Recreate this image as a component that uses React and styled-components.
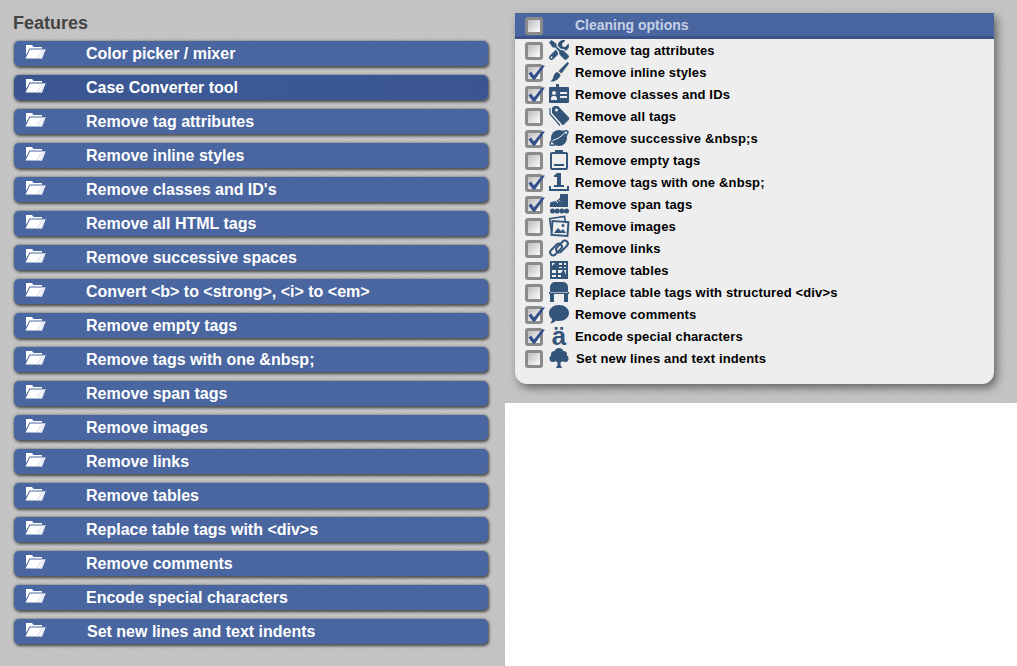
import React from 'react';
import styled, { createGlobalStyle } from 'styled-components';
import { FaTools } from 'react-icons/fa';

const features = [
  'Color picker / mixer',
  'Case Converter tool',
  'Remove tag attributes',
  'Remove inline styles',
  "Remove classes and ID's",
  'Remove all HTML tags',
  'Remove successive spaces',
  'Convert <b> to <strong>, <i> to <em>',
  'Remove empty tags',
  'Remove tags with one &nbsp;',
  'Remove span tags',
  'Remove images',
  'Remove links',
  'Remove tables',
  'Replace table tags with <div>s',
  'Remove comments',
  'Encode special characters',
  'Set new lines and text indents',
];

const Ico = styled.svg.attrs({ viewBox: '0 0 20 20', width: 20, height: 20, fill: 'currentColor' })`
  display: block;
  overflow: visible;
`;

const BrushIcon = () => (
  <Ico>
    <path d="M18.500 0L20 1.500 12.500 11.500 9.500 9z" />
    <path d="M8.500 10l3 2.500C11 16.500 6.500 20 1 19.500 4 18 4 15.500 5 13c.6-1.500 2-2.800 3.500-3z" />
  </Ico>
);

const IdCardIcon = () => (
  <Ico>
    <path d="M7 0h3v4H7z" />
    <path fillRule="evenodd" d="M1 3h18a1 1 0 0 1 1 1v14a1 1 0 0 1-1 1H1a1 1 0 0 1-1-1V4a1 1 0 0 1 1-1zm4 4a2 2 0 1 0 0 4 2 2 0 0 0 0-4zM2 16h6v-2.500L6.500 12h-3L2 13.500zm9-8v2h7V8zm0 4v2h7v-2z" />
  </Ico>
);

const TagIcon = () => (
  <Ico>
    <path fillRule="evenodd" d="M5 0h4l11 11.500q.6 1 0 2L15 18.500q-1 1-2 0L3 7V2zm2.500 2.500a1.500 1.500 0 1 0 0 3 1.500 1.500 0 0 0 0-3z" />
    <path fill="none" stroke="currentColor" strokeWidth="1.200" d="M1 2v6l10 11.500" />
  </Ico>
);

const PlanetIcon = () => (
  <Ico>
    <circle cx="10" cy="10" r="8" />
    <ellipse cx="10" cy="10" rx="11" ry="3.500" transform="rotate(-38 10 10)" fill="none" stroke="currentColor" strokeWidth="1.500" />
    <path d="M3.500 12.500C8 11.500 13 8 16 4.500" fill="none" stroke="#eeeeee" strokeWidth="1" />
  </Ico>
);

const EmptyTagIcon = () => (
  <Ico>
    <path d="M6 0h8v2H6z" />
    <path fillRule="evenodd" d="M3 2h14a2 2 0 0 1 2 2v14a2 2 0 0 1-2 2H3a2 2 0 0 1-2-2V4a2 2 0 0 1 2-2zm0 2v14h14V4z" />
    <path d="M5 14h10v2H5z" />
  </Ico>
);

const OneIcon = () => (
  <Ico>
    <path d="M8 1h4v12h3v2H5v-2h3V5H5V3.500z" />
    <path d="M0 14h2v3h16v-3h2v5H0z" />
  </Ico>
);

const SkateIcon = () => (
  <Ico>
    <path d="M11 0h8v13H1c-.5-2 0-4 1-5l5-1 4-3z" />
    <path d="M1 13.500h18" stroke="#eeeeee" strokeWidth=".7" />
    <path d="M7 7l2 2M9 5.500l2 2" stroke="#eeeeee" strokeWidth="1" />
    <circle cx="3.500" cy="17" r="2.500" />
    <circle cx="8.200" cy="17" r="2.500" />
    <circle cx="12.900" cy="17" r="2.500" />
    <circle cx="17.500" cy="17" r="2.500" />
  </Ico>
);

const ImagesIcon = () => (
  <Ico>
    <rect x="1.500" y="1.500" width="15" height="12" transform="rotate(-8 9 8)" fill="none" stroke="currentColor" strokeWidth="1.600" />
    <rect x="3" y="5.500" width="16" height="14" transform="rotate(4 11 12)" fill="#eeeeee" stroke="currentColor" strokeWidth="2" />
    <path d="M5 17l4-5 3 3 2-2 3 4z" />
    <circle cx="14" cy="9.500" r="1.500" />
  </Ico>
);

const LinkIcon = () => (
  <Ico>
    <g fill="none" stroke="currentColor" strokeWidth="2">
      <rect x="6" y="5.500" width="14" height="6" rx="3" transform="rotate(-45 13 8.500)" />
      <rect x="0" y="8.500" width="14" height="6" rx="3" transform="rotate(-45 7 11.500)" />
    </g>
  </Ico>
);

const TableIcon = () => (
  <Ico>
    <path fillRule="evenodd" d="M1 1h18v18H1zM3 10v3h4v-3zm6 0v3h3l2-3zm-6 5v2h4v-2zm6 0v2h3v-2zM10 3v2h3V3zm5 0v2h2V3zm-5 4v1h3V7zm5 0v1h2V7z" />
    <path fill="#eeeeee" d="M3 3h3L3 6z" />
    <path fill="#eeeeee" d="M15 10h2v5z" />
  </Ico>
);

const StructureIcon = () => (
  <Ico>
    <path d="M6 0h8a5 5 0 0 1 5 5v5h1v2h-1v8h-4V12H5v8H1v-8H0v-2h1V5a5 5 0 0 1 5-5z" />
    <path d="M1 10.500h18" stroke="#eeeeee" strokeWidth=".6" />
  </Ico>
);

const CommentIcon = () => (
  <Ico>
    <path d="M10 1c5.500 0 10 3.500 10 8s-4.500 8-10 8c-1 0-2 0-3-.3C5 18.500 3 19.500 1 19.500c1.500-1.500 2-3 2-4.500C1 13.500 0 11.500 0 9c0-4.500 4.500-8 10-8z" />
  </Ico>
);

const TreeIcon = () => (
  <Ico>
    <circle cx="10" cy="4.500" r="4.500" />
    <circle cx="5.500" cy="6.500" r="3.500" />
    <circle cx="14.500" cy="6.500" r="3.500" />
    <circle cx="4" cy="10.500" r="3.500" />
    <circle cx="16" cy="10.500" r="3.500" />
    <circle cx="10" cy="10" r="4.500" />
    <path d="M8.500 12h3v5l1.500 3H7l1.500-3z" />
  </Ico>
);

const FolderIcon = () => (
  <svg viewBox="0 0 21 14" width="21" height="14">
    <path fill="#fff" d="M1 0h6l1.500 2H17v1.500H4.500L1 10z" />
    <path fill="#fff" d="M5 4.500h15.500L17 13.500H0.500z" />
    <path fill="#dfe4f0" d="M11 13.500l6-9h1.500l-6 9zM15 13.500l4-9h1.500L17 13.500z" />
  </svg>
);

const options = [
  { label: 'Remove tag attributes', icon: <FaTools size={20} /> },
  { label: 'Remove inline styles', icon: <BrushIcon />, checked: true },
  { label: 'Remove classes and IDs', icon: <IdCardIcon />, checked: true },
  { label: 'Remove all tags', icon: <TagIcon /> },
  { label: 'Remove successive &nbsp;s', icon: <PlanetIcon />, checked: true },
  { label: 'Remove empty tags', icon: <EmptyTagIcon /> },
  { label: 'Remove tags with one &nbsp;', icon: <OneIcon />, checked: true },
  { label: 'Remove span tags', icon: <SkateIcon />, checked: true },
  { label: 'Remove images', icon: <ImagesIcon /> },
  { label: 'Remove links', icon: <LinkIcon /> },
  { label: 'Remove tables', icon: <TableIcon /> },
  { label: 'Replace table tags with structured <div>s', icon: <StructureIcon /> },
  { label: 'Remove comments', icon: <CommentIcon />, checked: true },
  { label: 'Encode special characters', glyph: 'ä', checked: true },
  { label: 'Set new lines and text indents', icon: <TreeIcon />, nudge: true },
];

const GlobalStyle = createGlobalStyle`
  html, body {
    margin: 0;
    padding: 0;
    background: #fff;
  }
  body {
    font-family: "Liberation Sans", Arial, sans-serif;
  }
`;

const Page = styled.div`
  display: flex;
  align-items: flex-start;
  width: 1017px;
  height: 666px;
  overflow: hidden;
`;

const textured = `
  background-color: #c4c4c4;
  background-image:
    repeating-linear-gradient(37deg, rgba(255, 255, 255, 0.025) 0 1px, transparent 1px 3px),
    repeating-linear-gradient(-61deg, rgba(0, 0, 0, 0.02) 0 1px, transparent 1px 4px);
`;

const FeatureColumn = styled.section`
  width: 505px;
  height: 666px;
  flex: none;
  box-sizing: border-box;
  padding: 13px 17px 0 14px;
  ${textured}
`;

const Heading = styled.h2`
  margin: 0 0 8px -1px;
  height: 20px;
  font-size: 18px;
  line-height: 20px;
  font-weight: bold;
  color: #444;
`;

const FeatureList = styled.div`
  display: flex;
  flex-direction: column;
  gap: 9px;
`;

const FeatureButton = styled.div`
  display: flex;
  align-items: center;
  height: 25px;
  border-radius: 5px;
  background: ${({ $active }) => ($active ? 'linear-gradient(90deg, #3a5590, #3d5a96 40%, #3a5590)' : '#4a66a0')};
  box-shadow: 0 0 3px #666, 1px 2px 3px #444;
  color: #fff;
  font-size: 16px;
  font-weight: bold;
`;

const FolderSlot = styled.span`
  display: flex;
  width: 72px;
  flex: none;
  box-sizing: border-box;
  padding: 0 0 4px 11px;
`;

const FeatureLabel = styled.span`
  padding-left: ${({ $nudge }) => ($nudge ? '1px' : '0')};
  white-space: pre;
`;

const OptionsColumn = styled.section`
  width: 512px;
  height: 403px;
  flex: none;
  box-sizing: border-box;
  padding: 13px 23px 0 10px;
  ${textured}
`;

const Panel = styled.div`
  height: 371px;
  border-radius: 0 0 12px 12px;
  background: #eeeeee;
  box-shadow: 3px 4px 8px #666;
`;

const PanelHeader = styled.div`
  display: flex;
  align-items: center;
  height: 23px;
  padding-left: 10px;
  background: #4a66a0;
  border-bottom: 3px solid #3a5288;
  color: #c5d0e6;
  font-size: 14px;
  font-weight: bold;
`;

const HeaderLabel = styled.span`
  margin-left: 32px;
`;

const OptionRow = styled.div`
  display: flex;
  align-items: center;
  height: 22px;
  padding-left: 10px;
  color: #000;
  font-size: 13px;
  font-weight: bold;
  letter-spacing: 0.15px;
`;

const CheckBox = styled.span`
  position: relative;
  display: block;
  flex: none;
  width: 12px;
  height: 12px;
  margin-top: 2px;
  border: 3px solid #8b8b8b;
  border-radius: 3px;
  background: linear-gradient(135deg, #bcbcbc, #fdfdfd);
`;

const Tick = styled.svg`
  position: absolute;
  left: -3px;
  top: -3px;
  width: 20px;
  height: 18px;
`;

const IconSlot = styled.span`
  display: flex;
  align-items: center;
  justify-content: center;
  flex: none;
  width: 20px;
  height: 22px;
  margin: 0 6px;
  color: #34557a;
`;

const Glyph = styled.span`
  font-size: 26px;
  line-height: 22px;
  font-weight: bold;
  letter-spacing: 0;
  color: #34557a;
`;

const OptionLabel = styled.span`
  padding-left: ${({ $nudge }) => ($nudge ? '1px' : '0')};
  white-space: pre;
`;

function Check({ checked }) {
  return (
    <CheckBox>
      {checked && (
        <Tick viewBox="0 0 20 18">
          <path fill="#34508c" d="M3.500 9.500L6 7.500l3 4L17 1.500h3L10 15.500H8z" />
        </Tick>
      )}
    </CheckBox>
  );
}

export default function App() {
  return (
    <Page>
      <GlobalStyle />
      <FeatureColumn>
        <Heading>Features</Heading>
        <FeatureList>
          {features.map((name, i) => (
            <FeatureButton key={name} $active={i === 1}>
              <FolderSlot><FolderIcon /></FolderSlot>
              <FeatureLabel $nudge={i === features.length - 1}>{name}</FeatureLabel>
            </FeatureButton>
          ))}
        </FeatureList>
      </FeatureColumn>
      <OptionsColumn>
        <Panel>
          <PanelHeader>
            <Check />
            <HeaderLabel>Cleaning options</HeaderLabel>
          </PanelHeader>
          {options.map((opt) => (
            <OptionRow key={opt.label}>
              <Check checked={opt.checked} />
              <IconSlot>{opt.glyph ? <Glyph>{opt.glyph}</Glyph> : opt.icon}</IconSlot>
              <OptionLabel $nudge={opt.nudge}>{opt.label}</OptionLabel>
            </OptionRow>
          ))}
        </Panel>
      </OptionsColumn>
    </Page>
  );
}
